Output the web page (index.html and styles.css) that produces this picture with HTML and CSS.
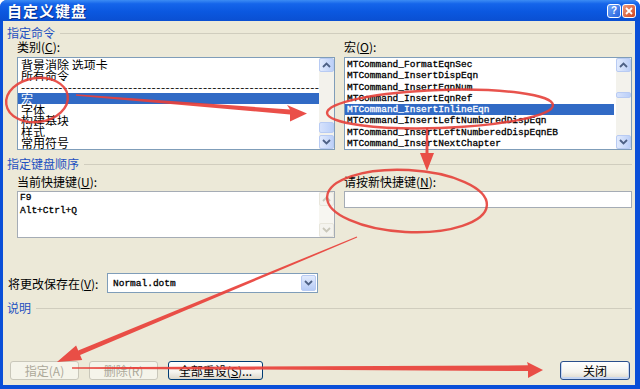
FILE: index.html
```html
<!DOCTYPE html>
<html lang="zh-CN">
  <head>
    <meta charset="UTF-8" />
    <title>自定义键盘</title>
    <link rel="stylesheet" href="styles.css">
  </head>
  <body>
    <div class="dialog">
      <div class="titlebar">
        <span class="title">自定义键盘</span>
        <div class="title-btns">
          <span class="tbtn help">?</span>
          <span class="tbtn close">
            <svg width="8" height="8" viewBox="0 0 8 8"><path d="M1 1 L7 7 M7 1 L1 7" stroke="#fff" stroke-width="1.8" /></svg>
          </span>
        </div>
      </div>

      <div class="content">
        <div class="section"><span>指定命令</span><i class="rule"></i></div>

        <div class="cols">
          <div class="col col-left">
            <div class="lbl">类别(<u>C</u>):</div>
            <div class="listbox">
              <ul class="items cat-items">
                <li>背景消除 选项卡</li>
                <li>所有命令</li>
                <li class="dashes">------------------------------------------------------------------------------------------</li>
                <li class="sel">宏</li>
                <li>字体</li>
                <li>构建基块</li>
                <li>样式</li>
                <li>常用符号</li>
              </ul>
              <div class="sbar">
                <span class="sbtn"><svg width="9" height="6" viewBox="0 0 9 6"><path d="M1 5 L4.5 1.5 L8 5" /></svg></span>
                <div class="track"><span class="thumb thumb-cat"></span></div>
                <span class="sbtn"><svg width="9" height="6" viewBox="0 0 9 6"><path d="M1 1 L4.5 4.5 L8 1" /></svg></span>
              </div>
            </div>
          </div>

          <div class="col col-right">
            <div class="lbl">宏(<u>O</u>):</div>
            <div class="listbox">
              <ul class="items macro-items">
                <li>MTCommand_FormatEqnSec</li>
                <li>MTCommand_InsertDispEqn</li>
                <li>MTCommand_InsertEqnNum</li>
                <li>MTCommand_InsertEqnRef</li>
                <li class="sel">MTCommand_InsertInlineEqn</li>
                <li>MTCommand_InsertLeftNumberedDispEqn</li>
                <li>MTCommand_InsertLeftNumberedDispEqnEB</li>
                <li>MTCommand_InsertNextChapter</li>
              </ul>
              <div class="sbar">
                <span class="sbtn"><svg width="9" height="6" viewBox="0 0 9 6"><path d="M1 5 L4.5 1.5 L8 5" /></svg></span>
                <div class="track"><span class="thumb thumb-macro"></span></div>
                <span class="sbtn"><svg width="9" height="6" viewBox="0 0 9 6"><path d="M1 1 L4.5 4.5 L8 1" /></svg></span>
              </div>
            </div>
          </div>
        </div>

        <div class="section section-keys"><span>指定键盘顺序</span><i class="rule"></i></div>

        <div class="cols">
          <div class="col col-left">
            <div class="lbl lbl-keys">当前快捷键(<u>U</u>):</div>
            <div class="keybox">
              <div class="keys">F9<br>Alt+Ctrl+Q</div>
              <div class="sbar off">
                <span class="sbtn"><svg width="9" height="6" viewBox="0 0 9 6"><path d="M1 5 L4.5 1.5 L8 5" /></svg></span>
                <div class="track"></div>
                <span class="sbtn"><svg width="9" height="6" viewBox="0 0 9 6"><path d="M1 1 L4.5 4.5 L8 1" /></svg></span>
              </div>
            </div>
          </div>
          <div class="col col-right">
            <div class="lbl lbl-keys">请按新快捷键(<u>N</u>):</div>
            <div class="newkey"></div>
          </div>
        </div>

        <div class="save-row">
          <span class="save-lbl">将更改保存在(<u>V</u>):</span>
          <div class="combo">
            <span class="combo-text">Normal.dotm</span>
            <span class="combo-btn"><svg width="9" height="6" viewBox="0 0 9 6"><path d="M1 1 L4.5 4.5 L8 1" /></svg></span>
          </div>
        </div>

        <div class="section section-desc"><span>说明</span><i class="rule"></i></div>

        <div class="buttons">
          <button class="btn btn-off">指定(A)</button>
          <button class="btn btn-off">删除(R)</button>
          <button class="btn btn-reset">全部重设(<u>S</u>)...</button>
          <button class="btn btn-close">关闭</button>
        </div>
      </div>

      <!-- red marks drawn over the screenshot -->
      <svg class="marks" width="640" height="389" viewBox="0 0 640 389">
        <ellipse cx="37" cy="100" rx="31" ry="22" transform="rotate(-8 37 100)" />
        <polygon class="fill" points="76,94.3 290,109.5 287,105 307,113.5 290,121.5 290,114.5 76,95.8" />
        <ellipse cx="440" cy="109" rx="113" ry="19" transform="rotate(-2 440 109)" />
        <polygon class="fill" points="426,128 428,128 428.5,153 434,153 427,171 420,153 425.5,153" />
        <ellipse cx="407" cy="201" rx="80" ry="31" transform="rotate(3 407 201)" />
        <polygon class="fill" points="356.8,236.5 78.2,350.4 76.1,345.4 57,362 82.2,360.1 80.1,355.1 357.2,237.5" />
        <polygon class="fill" points="72,367.3 528,365.3 527,362 543,370 528,378 528,371 72,368.7" />
      </svg>
    </div>
  </body>
</html>
```

FILE: styles.css
```css
* {
  margin: 0;
  padding: 0;
  box-sizing: border-box;
}

body {
  width: 640px;
  height: 389px;
  overflow: hidden;
  font-family: "Noto Sans CJK SC", "Noto Sans", sans-serif;
  font-size: 12px;
  color: #000;
  background: #ffffff;
}

.dialog {
  position: relative;
  width: 640px;
  height: 389px;
  display: flex;
  flex-direction: column;
  background: #0a4fd8;
  border-radius: 7px 7px 0 0;
}

/* title bar */
.titlebar {
  height: 21px;
  display: flex;
  align-items: center;
  justify-content: space-between;
  padding: 0 4px 0 7px;
  background: linear-gradient(#3c8cf4 0%, #1565ea 18%, #0b58e0 55%, #0a4fd2 100%);
  border-radius: 7px 7px 0 0;
}

.title {
  color: #fff;
  font-weight: bold;
  font-size: 15px;
  line-height: 21px;
  letter-spacing: 1px;
  text-shadow: 1px 1px 0 #0b2f8a;
}

.title-btns {
  display: flex;
  gap: 1px;
}

.tbtn {
  width: 14px;
  height: 14px;
  border: 1px solid #fff;
  border-radius: 3px;
  display: flex;
  align-items: center;
  justify-content: center;
  color: #fff;
  font-family: "Liberation Sans", sans-serif;
  font-weight: bold;
  font-size: 10px;
}

.help {
  background: linear-gradient(135deg, #6ea6fb, #2660dc);
}

.close {
  background: linear-gradient(135deg, #ee9a7c, #d0451f);
}

/* body */
.content {
  flex: 1;
  margin: 0 5px 4px 3px;
  padding: 5px 3px 5px 4px;
  background: #ece9d8;
  display: flex;
  flex-direction: column;
}

.section {
  display: flex;
  align-items: center;
  height: 14px;
  line-height: 14px;
  color: #1e50c0;
}

.rule {
  flex: 1;
  margin-left: 5px;
  border-top: 1px solid #d0cdbe;
}

.section-keys {
  margin-top: 7px;
}

.section-desc {
  margin-top: 8px;
}

.cols {
  display: flex;
  gap: 9px;
  padding-left: 10px;
}

.col-left {
  width: 318px;
}

.col-right {
  width: 288px;
}

.lbl {
  height: 12px;
  line-height: 12px;
  margin-top: 1px;
  margin-bottom: 4px;
}

.lbl-keys {
  margin-top: 5px;
  margin-bottom: 3px;
}

/* list boxes */
.listbox {
  height: 93px;
  border: 1px solid #7f9db9;
  background: #fff;
  display: flex;
}

.items {
  flex: 1;
  list-style: none;
  overflow: hidden;
  padding-top: 1px;
}

.items li {
  white-space: nowrap;
  overflow: hidden;
}

.cat-items li {
  height: 11.2px;
  line-height: 11.2px;
  padding-left: 3px;
}

.cat-items .dashes {
  padding-right: 10px;
  letter-spacing: 0.5px;
}

.macro-items li {
  height: 11.3px;
  line-height: 11.3px;
  padding-left: 2px;
  margin-right: 2px;
  font-family: "Liberation Mono", monospace;
  font-size: 9.5px;
  -webkit-text-stroke: 0.3px currentColor;
}

.items .sel {
  background: #316ac5;
  color: #fff;
}

/* scroll bars */
.sbar {
  width: 15px;
  display: flex;
  flex-direction: column;
  background: #f3f2ec;
}

.sbtn {
  height: 14px;
  border: 1px solid #b8cbf3;
  border-radius: 2px;
  background: linear-gradient(to right, #e2ebfd, #bcd0f8);
  display: flex;
  align-items: center;
  justify-content: center;
}

.sbtn svg path,
.combo-btn svg path {
  fill: none;
  stroke: #4d6185;
  stroke-width: 1.8;
}

.track {
  flex: 1;
}

.thumb {
  display: block;
  border: 1px solid #b8cbf3;
  border-radius: 2px;
  background: linear-gradient(to right, #d6e2fc, #bacff8);
}

.thumb-cat {
  margin-top: 50px;
  height: 11px;
}

.thumb-macro {
  margin-top: 20px;
  height: 6px;
}

.sbar.off {
  background: #f7f6f1;
}

.sbar.off .sbtn {
  border-color: #e8e6dc;
  background: #f4f3ee;
}

.sbar.off .sbtn svg path {
  stroke: #c9c7ba;
}

/* key fields */
.keybox {
  height: 47px;
  border: 1px solid #a5acb5;
  background: #fff;
  display: flex;
}

.keys {
  flex: 1;
  padding-left: 2px;
  font-family: "Liberation Mono", monospace;
  font-size: 9.5px;
  line-height: 12.5px;
  -webkit-text-stroke: 0.3px currentColor;
}

.newkey {
  height: 17px;
  border: 1px solid #a5acb5;
  background: #fff;
}

/* save row */
.save-row {
  margin-top: 35px;
  display: flex;
  align-items: center;
  height: 20px;
}

.save-lbl {
  width: 100px;
  padding-left: 1px;
}

.combo {
  width: 211px;
  height: 20px;
  border: 1px solid #7f9db9;
  background: #fff;
  display: flex;
  align-items: center;
  justify-content: space-between;
  padding: 1px;
}

.combo-text {
  padding-left: 4px;
  font-family: "Liberation Mono", monospace;
  font-size: 9.5px;
  -webkit-text-stroke: 0.3px currentColor;
}

.combo-btn {
  width: 15px;
  height: 16px;
  border: 1px solid #b8cbf3;
  border-radius: 2px;
  background: linear-gradient(#e2ebfd, #b6cbf6);
  display: flex;
  align-items: center;
  justify-content: center;
}

/* buttons */
.buttons {
  margin-top: auto;
  display: flex;
  gap: 10px;
  padding-left: 3px;
  padding-right: 2px;
}

.btn {
  height: 19px;
  border: 1px solid #003c74;
  border-radius: 3px;
  background: linear-gradient(#ffffff, #f4f3ee 60%, #dcd7cb);
  font-family: "Noto Sans CJK SC", "Noto Sans", sans-serif;
  font-size: 12px;
  line-height: 16px;
  color: #000;
  text-align: center;
}

.btn-off {
  width: 69px;
  border-color: #c9c7ba;
  background: #f5f4ea;
  color: #aca899;
}

.btn-reset {
  width: 95px;
}

.btn-close {
  width: 70px;
  margin-left: auto;
  border-color: #2a4f8c;
  box-shadow: inset 0 -1px 0 1px #c5d5f2;
}

/* red annotation overlay */
.marks {
  position: absolute;
  top: 0;
  left: 0;
  pointer-events: none;
}

.marks ellipse {
  fill: none;
  stroke: #e6403a;
  stroke-width: 2.4;
  opacity: 0.9;
}

.marks .fill {
  fill: #e8403a;
  opacity: 0.92;
}
```
